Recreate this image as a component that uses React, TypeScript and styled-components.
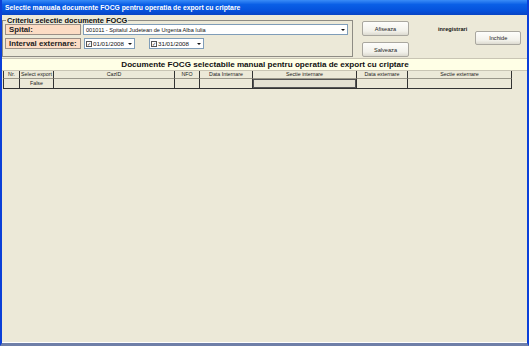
import styled, { createGlobalStyle } from "styled-components"

const GlobalStyle = createGlobalStyle`
  html, body {
    margin: 0;
    padding: 0;
    background: #ece9d8;
  }
  body {
    font-family: "Liberation Sans", Arial, sans-serif;
  }
`

const columns = [
  { title: "Nr.", width: 17, value: "" },
  { title: "Select export", width: 34, value: "False" },
  { title: "CazID", width: 121, value: "" },
  { title: "NFO", width: 25, value: "" },
  { title: "Data Internare", width: 53, value: "" },
  { title: "Sectie internare", width: 104, value: "", focused: true },
  { title: "Data externare", width: 51, value: "" },
  { title: "Sectie externare", width: 104, value: "" },
]

const App = () => {
  return (
    <>
      <GlobalStyle />
      <Window>
        <TitleBar>Selectie manuala documente FOCG pentru operatia de export cu criptare</TitleBar>
        <Body>
          <TopRow>
            <GroupBox>
              <Legend>Criteriu selectie documente FOCG</Legend>
              <FieldRow>
                <FieldLabel>Spital:</FieldLabel>
                <Combo>
                  <ComboText>001011 - Spitalul Judetean de Urgenta Alba Iulia</ComboText>
                  <DropArrow />
                </Combo>
              </FieldRow>
              <FieldRow>
                <FieldLabel>Interval externare:</FieldLabel>
                <DatePicker $offset={3} $width={51}>
                  <Check>✓</Check>
                  <DateText>01/01/2008</DateText>
                  <DropArrow />
                </DatePicker>
                <DatePicker $offset={14} $width={55}>
                  <Check>✓</Check>
                  <DateText>31/01/2008</DateText>
                  <DropArrow />
                </DatePicker>
              </FieldRow>
            </GroupBox>
            <ButtonColumn>
              <Button>Afiseaza</Button>
              <Button>Salveaza</Button>
            </ButtonColumn>
            <Records>inregistrari</Records>
            <CloseButton>Inchide</CloseButton>
          </TopRow>
          <GridArea>
            <GridCaption>Documente FOCG selectabile manual pentru operatia de export cu criptare</GridCaption>
            <Table>
              <Row>
                {columns.map((c) => (
                  <HeadCell key={c.title} style={{ width: c.width }}>
                    {c.title}
                  </HeadCell>
                ))}
              </Row>
              <Row>
                {columns.map((c) => (
                  <DataCell key={c.title} $focused={!!c.focused} style={{ width: c.width }}>
                    {c.value}
                  </DataCell>
                ))}
              </Row>
            </Table>
          </GridArea>
        </Body>
      </Window>
    </>
  )
}

const Window = styled.div`
  width: 529px;
  height: 346px;
  box-sizing: border-box;
  display: flex;
  flex-direction: column;
  border-left: 2px solid #0b3fd8;
  border-right: 2px solid #0b3fd8;
  border-bottom: 3px solid #6f7fa8;
  background: #ece9d8;
  overflow: hidden;
`

const TitleBar = styled.div`
  height: 15px;
  margin: 0 -2px;
  padding-left: 5px;
  display: flex;
  align-items: center;
  background: linear-gradient(180deg, #3a8cf7 0%, #0a5fe6 30%, #0552dc 70%, #0844c4 100%);
  color: #fff;
  font-size: 6.8px;
  font-weight: bold;
  white-space: nowrap;
`

const Body = styled.div`
  flex: 1;
  display: flex;
  flex-direction: column;
`

const TopRow = styled.div`
  height: 43px;
  display: flex;
  align-items: flex-start;
`

const GroupBox = styled.fieldset`
  margin: 2px 0 0 0;
  padding: 0 2px 3px 2px;
  width: 351px;
  height: 40px;
  box-sizing: border-box;
  border: 1px solid #8e8c84;
  display: flex;
  flex-direction: column;
  gap: 3px;
`

const Legend = styled.legend`
  padding: 0 1px;
  margin-left: 1px;
  font-size: 7.4px;
  font-weight: bold;
  color: #111;
  line-height: 7px;
`

const FieldRow = styled.div`
  display: flex;
  align-items: center;
  height: 11px;
`

const FieldLabel = styled.div`
  width: 76px;
  height: 11px;
  box-sizing: border-box;
  border: 1px solid #9a8f86;
  background: #fcdcc4;
  padding-left: 3px;
  font-size: 7.8px;
  font-weight: bold;
  line-height: 9px;
  color: #222;
`

const Combo = styled.div`
  margin-left: 2px;
  width: 265px;
  height: 11px;
  box-sizing: border-box;
  border: 1px solid #7f9db9;
  background: #fff;
  display: flex;
  align-items: center;
`

const ComboText = styled.span`
  flex: 1;
  padding-left: 2px;
  font-size: 5.6px;
  color: #111;
  white-space: nowrap;
`

const DropArrow = styled.span`
  width: 9px;
  height: 100%;
  display: flex;
  align-items: center;
  justify-content: center;
  &::after {
    content: "";
    border-left: 2px solid transparent;
    border-right: 2px solid transparent;
    border-top: 2px solid #111;
  }
`

const DatePicker = styled.div<{ $offset: number; $width: number }>`
  margin-left: ${(p) => p.$offset}px;
  width: ${(p) => p.$width}px;
  height: 11px;
  box-sizing: border-box;
  border: 1px solid #7f9db9;
  background: #fff;
  display: flex;
  align-items: center;
`

const Check = styled.span`
  width: 6px;
  height: 6px;
  margin-left: 1px;
  box-sizing: border-box;
  border: 1px solid #555;
  font-size: 5px;
  line-height: 4px;
  color: #222;
  text-align: center;
`

const DateText = styled.span`
  flex: 1;
  padding-left: 1px;
  font-size: 6.2px;
  color: #111;
`

const ButtonColumn = styled.div`
  margin: 6px 0 0 9px;
  display: flex;
  flex-direction: column;
  gap: 6px;
`

const Button = styled.div`
  width: 47px;
  height: 15px;
  box-sizing: border-box;
  border: 1px solid #a9a79f;
  border-radius: 2px;
  background: linear-gradient(180deg, #fdfdfb 0%, #f2f1ea 70%, #dcdad0 100%);
  display: flex;
  align-items: center;
  justify-content: center;
  font-size: 5.6px;
  color: #222;
`

const Records = styled.div`
  margin: 11px 0 0 29px;
  font-size: 5.6px;
  font-weight: bold;
  color: #111;
`

const CloseButton = styled(Button)`
  margin: 16px 0 0 8px;
  width: 46px;
  height: 14px;
`

const GridArea = styled.div`
  flex: 1;
  display: flex;
  flex-direction: column;
  border-bottom: 1px solid #fff;
`

const GridCaption = styled.div`
  height: 13px;
  box-sizing: border-box;
  margin-right: -1px;
  border-top: 1px solid #c9c5b4;
  border-bottom: 1px solid #c9c5b4;
  background: #ffffe6;
  display: flex;
  align-items: center;
  justify-content: center;
  font-size: 8.1px;
  font-weight: bold;
  color: #111;
  white-space: nowrap;
`

const Table = styled.div`
  margin-left: 1px;
  display: flex;
  flex-direction: column;
`

const Row = styled.div`
  display: flex;
`

const HeadCell = styled.div`
  height: 8px;
  box-sizing: border-box;
  border-right: 1px solid #333;
  border-bottom: 1px solid #9a978a;
  font-size: 5.3px;
  line-height: 7px;
  text-align: center;
  color: #222;
  white-space: nowrap;
  overflow: hidden;
  &:first-child {
    border-left: 1px solid #333;
  }
`

const DataCell = styled.div<{ $focused: boolean }>`
  height: 10px;
  box-sizing: border-box;
  border-right: 1px solid #333;
  border-bottom: 1px solid #333;
  font-size: 5.3px;
  line-height: 9px;
  text-align: center;
  color: #222;
  ${(p) => (p.$focused ? "box-shadow: inset 0 0 0 1px #555; background: #e4e1d2;" : "")}
  &:first-child {
    border-left: 1px solid #333;
  }
`

export default App
